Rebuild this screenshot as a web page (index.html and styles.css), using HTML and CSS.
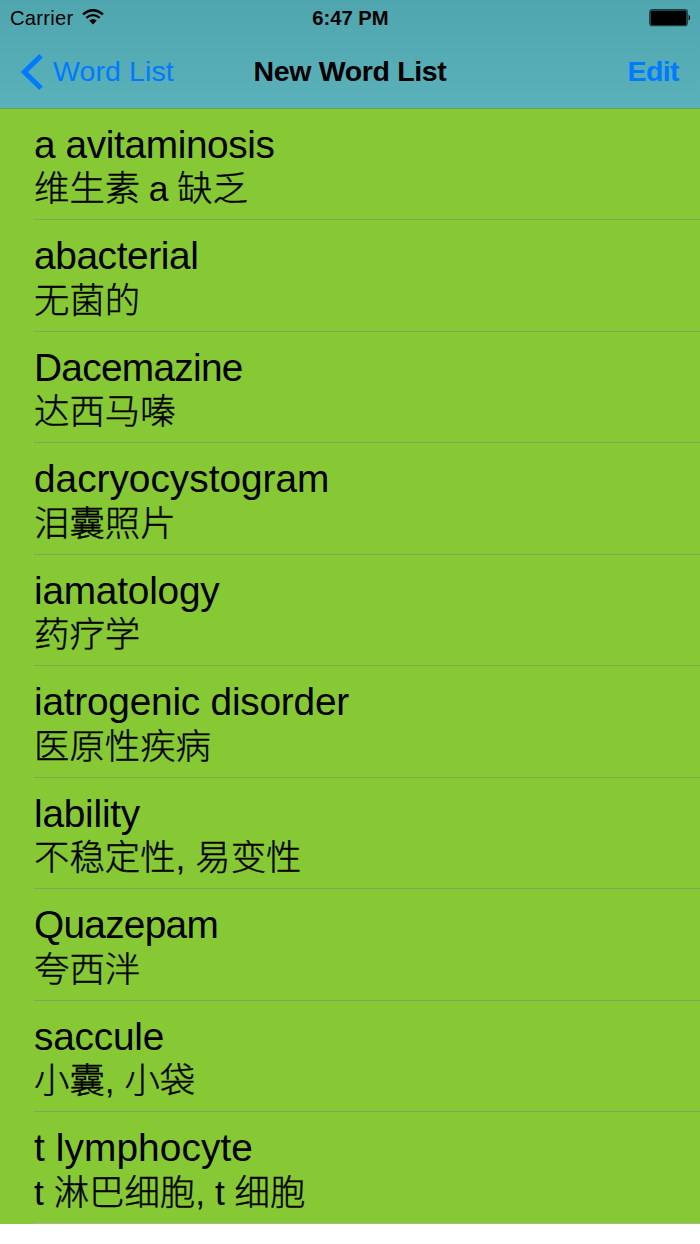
FILE: index.html
```
<!DOCTYPE html>
<html lang="en">
<head>
<meta charset="utf-8">
<title>New Word List</title>
<link rel="stylesheet" href="styles.css">
</head>
<body>
<header class="top">
  <div class="status">
    <div class="carrier"><span>Carrier</span>
      <svg class="wifi" width="22" height="16" viewBox="0 0 22 16"><g fill="none" stroke="#000" stroke-width="2.3"><path d="M1 5.3Q11 -2.7 21 5.3"/><path d="M4.3 8.9Q11 3.4 17.7 8.9"/></g><path d="M7.2 11.6Q11 8.4 14.8 11.6L11 15.5Z"/></svg>
    </div>
    <div class="time">6:47 PM</div>
    <svg class="battery" width="43" height="18" viewBox="0 0 43 18"><rect x=".7" y=".7" width="37.6" height="16" rx="2.5" fill="none" stroke="#173f42" stroke-width="1.2"/><rect x="1.5" y="1.5" width="36" height="14.4" rx="1.5"/><path d="M39.6 5.6Q42.8 8.7 39.6 11.8Z"/></svg>
  </div>
  <nav class="nav">
    <div class="back"><svg class="chevron" width="22" height="36" viewBox="0 0 22 36"><path d="M20 1.8L3.4 18L20 34.2" fill="none" stroke="#007aff" stroke-width="5"/></svg><span>Word List</span></div>
    <div class="heading">New Word List</div>
    <div class="edit">Edit</div>
  </nav>
</header>
<main class="list">
  <div class="row"><div class="word w1">a avitaminosis</div><div class="meaning m1">维生素 <span class="latin">a</span> 缺乏</div></div>
  <div class="row"><div class="word w2">abacterial</div><div class="meaning">无菌的</div></div>
  <div class="row"><div class="word w3">Dacemazine</div><div class="meaning">达西马嗪</div></div>
  <div class="row"><div class="word w4">dacryocystogram</div><div class="meaning">泪囊照片</div></div>
  <div class="row"><div class="word w5">iamatology</div><div class="meaning">药疗学</div></div>
  <div class="row"><div class="word w6">iatrogenic disorder</div><div class="meaning">医原性疾病</div></div>
  <div class="row"><div class="word w7">lability</div><div class="meaning">不稳定性<span class="latin">,</span> 易变性</div></div>
  <div class="row"><div class="word w8">Quazepam</div><div class="meaning">夸西泮</div></div>
  <div class="row"><div class="word w9">saccule</div><div class="meaning">小囊<span class="latin">,</span> 小袋</div></div>
  <div class="row"><div class="word w10">t lymphocyte</div><div class="meaning"><span class="latin">t</span> 淋巴细胞<span class="latin">, t</span> 细胞</div></div>
</main>
</body>
</html>
```
FILE: styles.css
```
* { box-sizing: border-box; }
body { margin: 0; width: 700px; height: 1244px; overflow: hidden; background: #fff; color: #000; font-family: "Liberation Sans", "Noto Sans CJK SC", sans-serif; }
.top { height: 108px; background: linear-gradient(#50a6ae, #5ab1b9); }
.status { height: 36px; display: grid; grid-template-columns: 1fr auto 1fr; align-items: center; padding: 0 9px 0 10px; font-size: 20.2px; }
.carrier { display: flex; align-items: center; gap: 9px; letter-spacing: .25px; }
.wifi { margin-top: -3px; }
.time { font-weight: 700; }
.battery { justify-self: end; margin-right: -1px; }
.nav { height: 72px; display: grid; grid-template-columns: 1fr auto 1fr; align-items: center; padding: 0 21px 1px; font-size: 28.5px; color: #007aff; }
.back { display: flex; align-items: center; gap: 10px; letter-spacing: .1px; }
.heading { color: #000; font-weight: 700; letter-spacing: -.35px; }
.edit { justify-self: end; font-weight: 700; letter-spacing: -.6px; }
.list { background: #86c935; border-top: 1px solid #65a15c; height: 1115.5px; }
.row { height: 111.52px; margin-left: 34px; padding-top: 13px; border-bottom: 1px solid #7fa65a; white-space: nowrap; }
.row:first-child { height: 111.2px; padding-top: 12.8px; }
.row:last-child { height: 111.2px; border-color: #a4b894; }
.word { height: 45.6px; line-height: 46px; font-size: 38.8px; letter-spacing: -.45px; }
.w1 { letter-spacing: -.37px; }
.w2 { letter-spacing: -.37px; }
.w3 { letter-spacing: -.7px; }
.w4 { letter-spacing: 0; }
.w5 { letter-spacing: -.22px; }
.w6 { letter-spacing: -.22px; }
.w7 { letter-spacing: -.22px; }
.w8 { letter-spacing: -.72px; }
.w9 { letter-spacing: -.2px; }
.w10 { letter-spacing: .1px; }
.meaning { height: 44px; line-height: 44px; font-size: 35.4px; font-weight: 300; -webkit-text-stroke: .4px #000; }
.latin { -webkit-text-stroke: 0; }
.m1 { word-spacing: -1.2px; }
```
